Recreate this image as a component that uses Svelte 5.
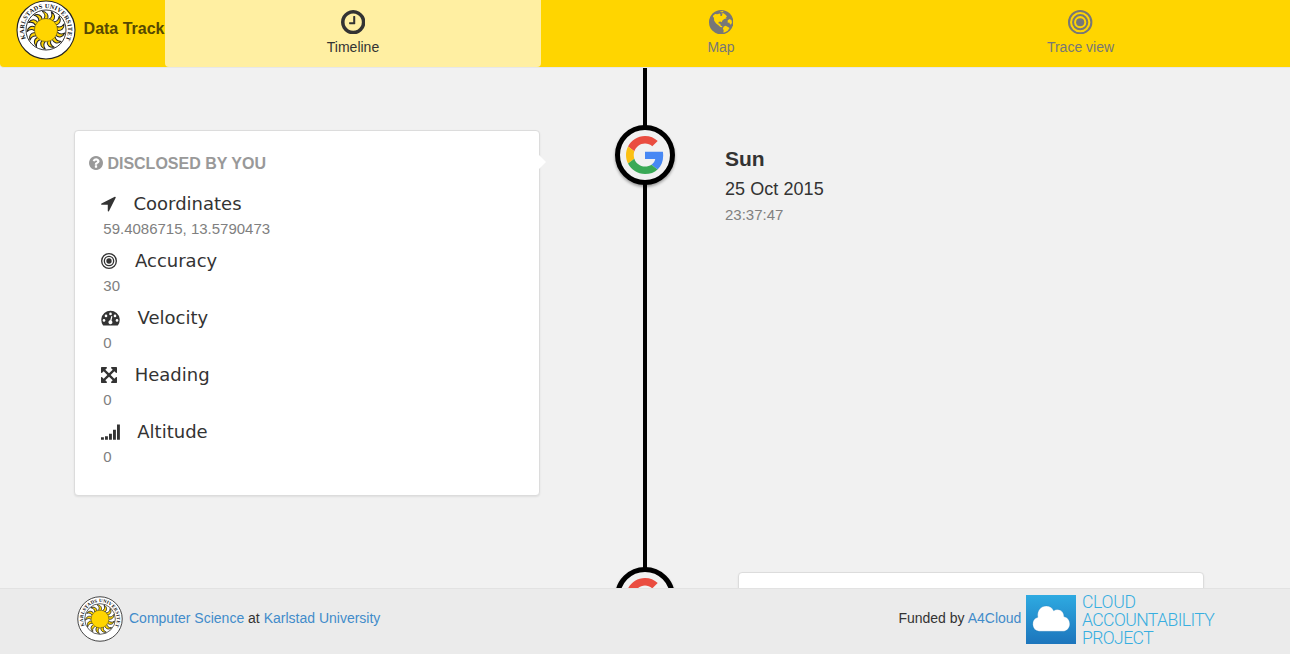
<script>
  const rays = Array.from({ length: 13 }, (_, i) => i * 360 / 13);

  const tabs = [
    { id: 'timeline', label: 'Timeline', active: true },
    { id: 'map', label: 'Map', active: false },
    { id: 'trace', label: 'Trace view', active: false }
  ];

  const attributes = [
    { icon: 'arrow', width: 16, gap: 16.5, name: 'Coordinates', value: '59.4086715, 13.5790473' },
    { icon: 'target', width: 16, gap: 18, name: 'Accuracy', value: '30' },
    { icon: 'gauge', width: 19, gap: 17.5, name: 'Velocity', value: '0' },
    { icon: 'expand', width: 16, gap: 17.7, name: 'Heading', value: '0' },
    { icon: 'signal', width: 19, gap: 17.3, name: 'Altitude', value: '0' }
  ];
</script>

{#snippet seal(size, id)}
  <svg class="seal" width={size} height={size} viewBox="0 0 60 60">
    <defs><path {id} d="M9.8 38.7A22 22 0 1 1 50.2 38.7" /></defs>
    <circle cx="30" cy="30" r="29" fill="#fff" stroke="#222" stroke-width="1.1" />
    <circle cx="30" cy="30" r="20" fill="#fff" stroke="#222" stroke-width=".9" />
    {#each rays as angle}
      <path
        transform="rotate({angle} 30 30)"
        d="M27.8 18.8C29.2 16.4 29.6 14.4 26.2 11.4C30.6 11.6 33 14.8 31.6 18.9Z"
        fill="#ffd500" stroke="#222" stroke-width="1" stroke-linejoin="round"
      />
    {/each}
    <circle cx="30" cy="30" r="11.5" fill="#ffd500" stroke="#6b5c10" stroke-width=".5" />
    <text class="seal-text"><textPath href="#{id}" textLength="88" lengthAdjust="spacing">KARLSTADS UNIVERSITET</textPath></text>
  </svg>
{/snippet}

{#snippet glyph(name, width, height)}
  {#if name === 'timeline'}
    <svg {width} {height} viewBox="128 128 1536 1536"><path fill="currentColor" d="M1024 544v448q0 14-9 23t-23 9h-320q-14 0-23-9t-9-23v-64q0-14 9-23t23-9h224v-352q0-14 9-23t23-9h64q14 0 23 9t9 23zm416 352q0-148-73-273t-198-198-273-73-273 73-198 198-73 273 73 273 198 198 273 73 273-73 198-198 73-273zm224 0q0 209-103 385.5t-279.5 279.5-385.5 103-385.5-103-279.5-279.5-103-385.5 103-385.5 279.5-279.5 385.5-103 385.5 103 279.5 279.5 103 385.5z" /></svg>
  {:else if name === 'map'}
    <svg {width} {height} viewBox="0 0 24 24">
      <circle cx="12" cy="12" r="12" fill="currentColor" />
      <path fill="#ffd500" d="M4 5.6L6 4L8 4.2L10.6 3.4L11.4 4.4L10.8 5.4L12.6 6L13.2 4.4L12.2 3.4L14.4 3.2L16.6 5L17.8 6.6L16.4 7L17.4 8.2L15 8.8L13.2 10.4L12.5 12L11.1 11.2L9.4 11.8L9.4 13.4L11 13.6L11.6 15.4L13.1 16L12.8 17L11.2 16.8L9 14.7L7 13.2L5.1 10.6L4.8 7.3L3.9 6.8ZM10.6 1.6L13.3 1L14.5 2L12.2 2.3ZM14.6 16.3L16.4 15.6L18.6 16.8L20.2 17.8L18.4 20.3L16.2 21.7L14.2 22.3L14.4 20L13.6 18.2ZM18.4 10L20.4 8.8L22.2 10L22.6 12.4L21.6 14.4L20.4 13.6L20 12.4L18.4 12.6Z" />
    </svg>
  {:else if name === 'trace' || name === 'target'}
    <svg {width} {height} viewBox="0 0 24 24" fill="none" stroke="currentColor" stroke-width="2">
      <circle cx="12" cy="12" r="11" /><circle cx="12" cy="12" r="7" />
      <circle cx="12" cy="12" r="4" fill="currentColor" stroke="none" />
    </svg>
  {:else if name === 'question'}
    <svg {width} {height} viewBox="128 128 1536 1536"><path fill="currentColor" d="M1024 1376v-192q0-14-9-23t-23-9h-192q-14 0-23 9t-9 23v192q0 14 9 23t23 9h192q14 0 23-9t9-23zm256-672q0-88-55.5-163t-138.5-116-170-41q-243 0-371 213-15 24 8 42l132 100q7 6 19 6 16 0 25-12 53-68 86-92 34-24 86-24 48 0 85.5 26t37.5 59q0 38-20 61t-68 45q-63 28-115.5 86.5t-52.5 125.5v36q0 14 9 23t23 9h192q14 0 23-9t9-23q0-19 21.5-49.5t54.5-49.5q32-18 49-28.5t46-35 44.5-48 28-60.5 12.5-81zm384 192q0 209-103 385.5t-279.5 279.5-385.5 103-385.5-103-279.5-279.5-103-385.5 103-385.5 279.5-279.5 385.5-103 385.5 103 279.5 279.5 103 385.5z" /></svg>
  {:else if name === 'arrow'}
    <svg {width} {height} viewBox="180 180 1540 1540"><path fill="currentColor" d="M1593 349l-640 1280q-17 35-57 35-5 0-15-2-22-5-35.5-22.5t-13.5-39.5v-576h-576q-22 0-39.5-13.5t-22.5-35.5 4-42 29-30l1280-640q13-7 29-7 27 0 45 19 15 14 18.5 34.5t-6.5 39.5z" /></svg>
  {:else if name === 'expand'}
    <svg {width} {height} viewBox="128 128 1536 1536"><path fill="currentColor" d="M1411 541l-355 355 355 355 144-144q29-31 70-14 39 17 39 59v448q0 26-19 45t-45 19h-448q-42 0-59-40-17-39 14-69l144-144-355-355-355 355 144 144q31 30 14 69-17 40-59 40h-448q-26 0-45-19t-19-45v-448q0-42 40-59 39-17 69 14l144 144 355-355-355-355-144 144q-19 19-45 19-12 0-24-5-40-17-40-59v-448q0-26 19-45t45-19h448q42 0 59 40 17 39-14 69l-144 144 355 355 355-355-144-144q-31-30-14-69 17-40 59-40h448q26 0 45 19t19 45v448q0 42-39 59-13 5-25 5-26 0-45-19z" /></svg>
  {:else if name === 'gauge'}
    <svg {width} {height} viewBox="0 0 19 16">
      <path fill="currentColor" d="M2 15.2A9.2 9.2 0 1 1 17 15.2Q16.7 15.6 16.2 15.6H2.8Q2.3 15.6 2 15.2Z" />
      <g fill="#fff"><circle cx="3" cy="10.4" r="1.3" /><circle cx="5" cy="5.9" r="1.3" /><circle cx="9.5" cy="3.9" r="1.3" /><circle cx="14" cy="5.9" r="1.3" /><circle cx="16" cy="10.4" r="1.3" /><path d="M10.3 6.1L11.4 6.4L10.5 10.6A2 2 0 1 1 9.2 10.3Z" /></g>
    </svg>
  {:else}
    <svg {width} {height} viewBox="0 0 19 16" fill="currentColor"><path d="M0 13.3h2.9v2.4H0zM4 12.2h2.9v3.5H4zM8 9.8h2.9v5.9H8zM12 5.8h2.9v9.9H12zM16 .4h2.9v15.3H16z" /></svg>
  {/if}
{/snippet}

{#snippet provider()}
  <div class="provider">
    <svg width="38" height="38" viewBox="0 0 48 48">
      <path fill="#ea4d40" d="M24 9.5c3.54 0 6.71 1.22 9.21 3.6l6.85-6.85C35.9 2.38 30.47 0 24 0 14.62 0 6.51 5.38 2.56 13.22l7.98 6.19C12.43 13.72 17.74 9.5 24 9.5z" />
      <path fill="#4788f4" d="M46.98 24.55c0-1.57-.15-3.09-.38-4.55H24v9.02h12.94c-.58 2.96-2.26 5.48-4.78 7.18l7.73 6c4.51-4.18 7.09-10.36 7.09-17.65z" />
      <path fill="#fbc013" d="M10.53 28.59c-.48-1.45-.76-2.99-.76-4.59s.27-3.14.76-4.59l-7.98-6.19C.92 16.46 0 20.12 0 24c0 3.88.92 7.54 2.56 10.78l7.97-6.19z" />
      <path fill="#39a956" d="M24 48c6.48 0 11.93-2.13 15.89-5.81l-7.73-6c-2.15 1.45-4.92 2.3-8.16 2.3-6.26 0-11.57-4.22-13.47-9.91l-7.98 6.19C6.51 42.62 14.62 48 24 48z" />
    </svg>
  </div>
{/snippet}

<div class="page">
  <header>
    <div class="brand">{@render seal(60, 'seal-header')}<span>Data Track</span></div>
    <nav>
      {#each tabs as tab}
        <a class:active={tab.active}>{@render glyph(tab.id, 24.4, 24.4)}<span>{tab.label}</span></a>
      {/each}
    </nav>
  </header>

  <main>
    <section class="entry">
      <article class="card">
        <h2>{@render glyph('question', 14, 14)}<span>DISCLOSED BY YOU</span></h2>
        {#each attributes as item}
          <div class="attribute">
            <div class="name" style="gap: {item.gap}px">{@render glyph(item.icon, item.width, 16)}<span>{item.name}</span></div>
            <div class="value">{item.value}</div>
          </div>
        {/each}
      </article>
      {@render provider()}
      <div class="when">
        <strong>Sun</strong>
        <span class="date">25 Oct 2015</span>
        <span class="time">23:37:47</span>
      </div>
    </section>
    <section class="entry">
      {@render provider()}
      <article class="card right"></article>
    </section>
  </main>

  <footer>
    <div class="credit">{@render seal(46, 'seal-footer')}<span><a>Computer Science</a> at <a>Karlstad University</a></span></div>
    <div class="funding">
      <span>Funded by <a>A4Cloud</a></span>
      <div class="project">
        <svg width="50" height="49" viewBox="0 0 50 49">
          <defs><linearGradient id="sky" x2="0" y2="1"><stop stop-color="#2eaae1" /><stop offset="1" stop-color="#1c75bc" /></linearGradient></defs>
          <rect width="50" height="49" fill="url(#sky)" />
          <path fill="#fff" stroke="#1b6dab" stroke-opacity=".4" stroke-width=".6" d="M13 36.3A7.2 7.2 0 0 1 11.8 22.3C10.7 15.8 14.8 11 20.2 11C23.8 11 26.4 12.9 27.7 15.8C31.7 12.6 38.3 15.7 37.9 21.6C41.7 22.3 43.8 25.6 43.8 29C43.8 33 40.8 36.3 36.8 36.3Z" />
        </svg>
        <div class="project-name">
          <div class="cloud">CLOUD</div>
          <div>ACCOUNTABILITY</div>
          <div>PROJECT</div>
        </div>
      </div>
    </div>
  </footer>
</div>

<style>
  :global(body) { margin: 0; }
  .page {
    height: 654px;
    display: flex;
    flex-direction: column;
    overflow: hidden;
    background: #f1f1f1;
    color: #333;
    font: 14px/20px "Liberation Sans", Arial, sans-serif;
  }
  svg { display: block; flex: none; }
  header {
    height: 67px;
    flex: none;
    display: flex;
    background: #ffd500;
    border-bottom: 1px solid #e7e7e7;
    border-radius: 0 0 0 4px;
  }
  .brand {
    width: 165px;
    height: 60px;
    padding-left: 16.4px;
    box-sizing: border-box;
    display: flex;
    gap: 7.2px;
    color: #564902;
    font-size: 16px;
    font-weight: bold;
    line-height: 57px;
    white-space: nowrap;
  }
  .seal-text { font: bold 6.3px "Liberation Serif", serif; fill: #111; }
  nav { display: grid; grid-template-columns: 376px 360px 359px; }
  nav a {
    display: flex;
    flex-direction: column;
    align-items: center;
    padding-top: 9.7px;
    gap: 2.9px;
    color: #777;
  }
  nav a.active { background: #ffefa2; color: #333; border-radius: 0 0 4px 4px; }

  main {
    height: 520px;
    flex: none;
    overflow: hidden;
    padding: 57px 0 0 74px;
    box-sizing: border-box;
    background: linear-gradient(#000, #000) 643px 0 / 4px 100% no-repeat;
  }
  .entry {
    height: 442px;
    display: grid;
    grid-template-columns: 466px 75px 60px 63px 466px;
    align-items: start;
  }
  .card {
    position: relative;
    height: 366px;
    margin-top: 5px;
    padding: 24px 14px;
    box-sizing: border-box;
    background: #fff;
    border: 1px solid #dcdcdc;
    border-radius: 4px;
    box-shadow: 0 1px 2px rgba(0, 0, 0, .08);
    grid-row: 1;
  }
  .card:not(.right)::after {
    content: "";
    position: absolute;
    left: 100%;
    top: 24px;
    border: 7px solid transparent;
    border-left-color: #fff;
    border-right: 0;
  }
  .card.right { grid-column: 5; }
  h2 {
    display: flex;
    align-items: center;
    gap: 4.4px;
    margin: 0 0 20px;
    height: 17px;
    color: #999;
    font-size: 16px;
    line-height: 17px;
  }
  h2 :global(svg) { margin-top: -1px; }
  .attribute { height: 57px; padding-left: 12px; }
  .name {
    display: flex;
    align-items: center;
    height: 24px;
    font: 18px/24px "DejaVu Sans", sans-serif;
  }
  .name :global(svg) { margin-top: -1px; }
  .value { padding-left: 2.3px; color: #808080; font-size: 15px; line-height: 26px; }
  .provider {
    grid-column: 3;
    grid-row: 1;
    width: 60px;
    height: 60px;
    box-sizing: border-box;
    padding: 6px;
    border: 5px solid #000;
    border-radius: 50%;
    background: #f1f1f1;
    box-shadow: 0 2px 3px rgba(0, 0, 0, .35);
  }
  .when {
    grid-column: 4 / 6;
    padding: 19px 0 0 50px;
    display: flex;
    flex-direction: column;
  }
  .when strong { font-size: 21px; line-height: 29px; margin-bottom: 1px; }
  .date { font-size: 18px; line-height: 30px; letter-spacing: .06px; }
  .time { color: #808080; font-size: 15px; line-height: 22px; }

  footer {
    height: 66px;
    flex: none;
    box-sizing: border-box;
    border-top: 1px solid #e2e2e2;
    background: #ebebeb;
    display: flex;
    justify-content: space-between;
    padding: 6px 0 0 77px;
  }
  footer a { color: #428bca; }
  .credit, .funding { display: flex; line-height: 46px; }
  .credit { gap: 6px; }
  .funding { width: 391.6px; gap: 4.6px; }
  .credit :global(.seal) { margin-top: 1px; }
  .project { display: flex; gap: 6px; }
  .project-name {
    color: #38aee0;
    font: 300 17.6px/18px "Roboto", sans-serif;
    letter-spacing: -.6px;
    margin-top: -2px;
    white-space: nowrap;
  }
  .cloud { letter-spacing: -.3px; }
</style>
